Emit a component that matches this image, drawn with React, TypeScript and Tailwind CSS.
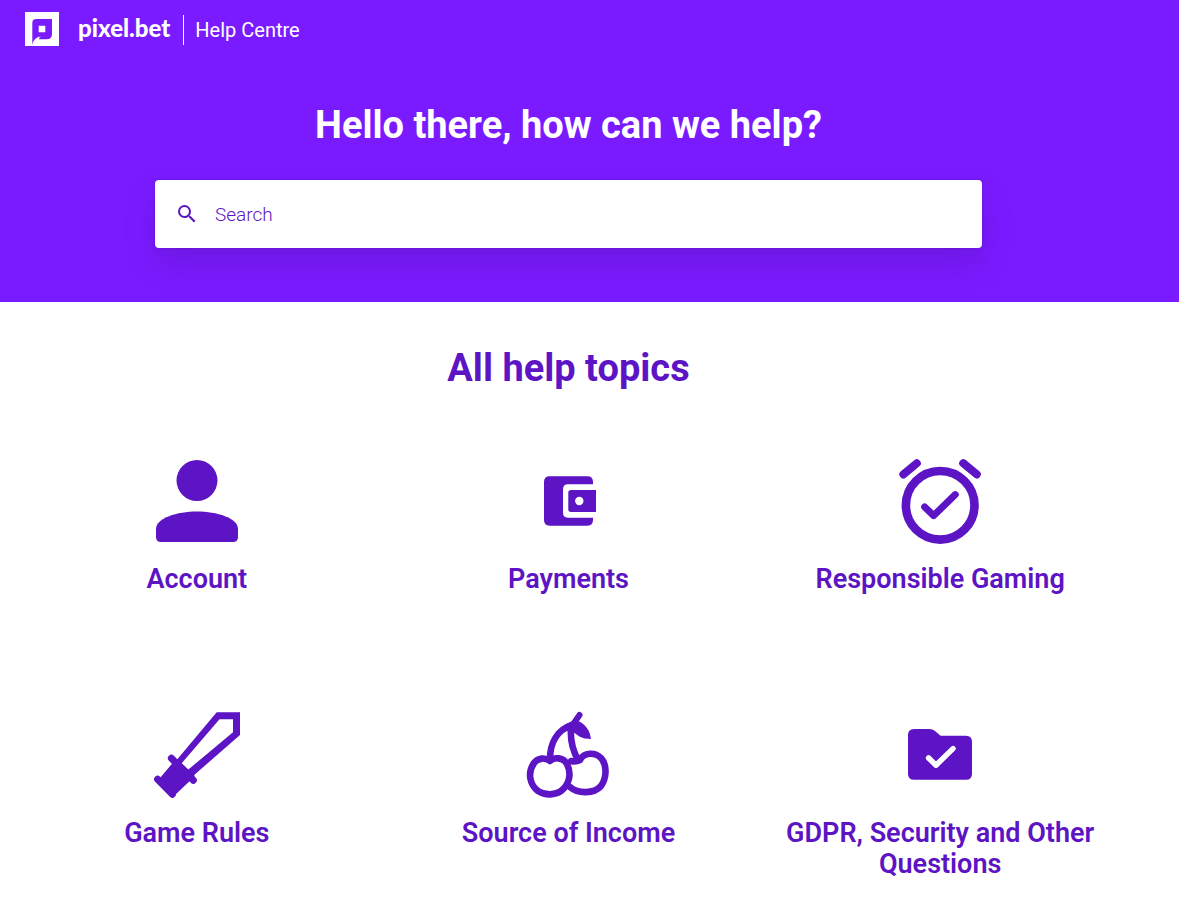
import React from "react";

const Account = () => (
  <>
    <circle cx="50" cy="29.5" r="20.5" />
    <path d="M9 78C9 67 30 60.500 50 60.500S91 67 91 78V86Q91 91 86 91H14Q9 91 9 86Z" />
  </>
);

const Payments = () => (
  <>
    <path d="M31.500 25.300H69.500Q75 25.300 75 31V33.300H50Q45 33.300 45 38.500V61.500Q45 66.700 50 66.700H75V69Q75 74.700 69.500 74.700H31.500Q26 74.700 26 69V31Q26 25.300 31.500 25.300Z" />
    <path
      fillRule="evenodd"
      d="M53 39H78V61H53Q50.300 61 50.300 58.300V41.700Q50.300 39 53 39ZM61.300 45.800A4.200 4.200 0 1 0 61.300 54.200A4.200 4.200 0 1 0 61.300 45.800Z"
    />
  </>
);

const Gaming = () => (
  <g fill="none" stroke="currentColor" strokeLinecap="round" strokeLinejoin="round">
    <circle cx="50.2" cy="54.3" r="34.3" strokeWidth="8.6" />
    <path strokeWidth="8" d="M13.400 23.400L26.800 12.200M73.200 12.200L86.800 23.400" />
    <path strokeWidth="7" d="M34.700 56L43.700 64.600L65.300 43.600" />
  </g>
);

const Sword = () => (
  <>
    <path
      fillRule="evenodd"
      d="M69.700 7.300H93V30L46 71L28 57ZM72.500 14.300L34.700 58.300L41.300 64.600L86 27.300V14.300Z"
    />
    <path d="M13 73L29 54L48 71L28 90Z" />
    <path
      fill="none"
      stroke="currentColor"
      strokeLinecap="round"
      strokeWidth="7"
      d="M24.400 53.300L46.300 75.300M10.600 74.300L25.400 89.300"
    />
  </>
);

const Cherries = () => (
  <>
    <g fill="none" stroke="currentColor" strokeLinecap="round" strokeLinejoin="round" strokeWidth="6.600">
      <path d="M32 56C27 52 20 53 16 58C9 68 12 80 20 86C28 91 37 90 43 86C51 80 54 69 49 59C45 52 36 52 32 56Z" />
      <path d="M53 56C57 57 60 56 62 55C66 47 77 47 83 53C90 61 88 74 83 81C76 89 60 89 52 82" />
      <path d="M32 54C32 38 39 25 54 20M60 55C55 46 52 35 53 22" />
      <path strokeWidth="6" d="M61.500 10L56 18" />
    </g>
    <path d="M49 19Q57 13 64 18Q72 24 73 34Q60 34 53 24Z" />
  </>
);

const Folder = () => (
  <>
    <path d="M24 24H39Q43 24 45 26L50.500 30.700H76Q82 30.700 82 36.700V68.700Q82 74.700 76 74.700H24Q18 74.700 18 68.700V30Q18 24 24 24Z" />
    <path
      fill="none"
      stroke="white"
      strokeLinecap="round"
      strokeLinejoin="round"
      strokeWidth="5.500"
      d="M38.600 53L46 60.200L63 43.600"
    />
  </>
);

const topics: { title: string; Icon: () => React.ReactElement }[] = [
  { title: "Account", Icon: Account },
  { title: "Payments", Icon: Payments },
  { title: "Responsible Gaming", Icon: Gaming },
  { title: "Game Rules", Icon: Sword },
  { title: "Source of Income", Icon: Cherries },
  { title: "GDPR, Security and Other Questions", Icon: Folder },
];

export default function App() {
  return (
    <div className="bg-white font-['Roboto',sans-serif] text-[#5c14c4]">
      <header className="bg-[#7a1bff] pb-[54px] text-white">
        <a href="#" className="flex h-[60px] w-fit items-center pl-[25px]">
          <svg viewBox="0 0 34 34" className="mb-0.5 size-[34px]" aria-hidden="true">
            <path fill="white" d="M0 0H34V34H0Z" />
            <path
              fill="#7a1bff"
              fillRule="evenodd"
              d="M7.300 33V11Q7.300 7 11.300 7H27V22Q27 27.300 21.500 27.300H14Q14 25.500 16 24.300Q8.500 25.500 7.300 33ZM13.700 13.700V20.300H20.300V13.700Z"
            />
          </svg>
          <span className="mb-1 ml-[19px] font-['Lato',sans-serif] text-[24px] leading-8 font-black">pixel.bet</span>
          <span className="ml-[13px] flex h-[30px] items-center border-l border-white pl-[11px] text-[20px]">
            Help Centre
          </span>
        </a>
        <div className="flex flex-col items-center pr-[42px] pt-10">
          <h1 className="text-[38px] leading-[50px] font-bold">Hello there, how can we help?</h1>
          <form
            role="search"
            className="mt-[30px] flex h-[68px] w-full max-w-[827px] items-center rounded bg-white pl-5 shadow-[0_16px_32px_rgba(60,10,110,0.2),0_0_2px_rgba(60,10,110,0.4)]"
          >
            <label htmlFor="search" aria-label="Search">
              <svg viewBox="0 0 24 24" className="size-6 fill-[#5c14c4]" aria-hidden="true">
                <path d="M15.500 14h-.79l-.28-.27A6.470 6.470 0 0 0 16 9.500 6.500 6.500 0 1 0 9.500 16c1.610 0 3.090-.59 4.230-1.570l.27.28v.79l5 4.990L20.490 19l-4.990-5zm-6 0C7.010 14 5 11.990 5 9.500S7.010 5 9.500 5 14 7.010 14 9.500 11.990 14 9.500 14z" />
              </svg>
            </label>
            <input
              id="search"
              type="text"
              placeholder="Search"
              className="h-full min-w-0 flex-1 px-4 text-[19px] font-light text-[#5c14c4] outline-none placeholder:text-[#5c14c4]"
            />
          </form>
        </div>
      </header>
      <main className="pr-[53px] pl-[11px] pt-[41px]">
        <h2 className="text-center text-[38px] leading-[50px] font-bold">All help topics</h2>
        <ul className="mt-[58px] grid grid-cols-3 gap-y-[110px]">
          {topics.map(({ title, Icon }) => (
            <li key={title}>
              <a href="#" className="flex flex-col items-center px-5 text-center">
                <svg viewBox="0 0 100 100" className="size-[100px] fill-current" aria-hidden="true">
                  <Icon />
                </svg>
                <h3 className="mt-[13px] text-[27px] leading-[31px] font-semibold">{title}</h3>
              </a>
            </li>
          ))}
        </ul>
      </main>
    </div>
  );
}
